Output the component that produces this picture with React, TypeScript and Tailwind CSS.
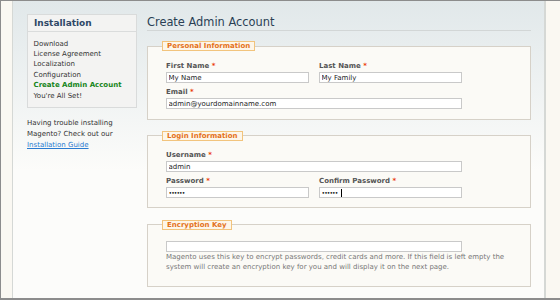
import React from "react";

function Label({ text }: { text: string }) {
  return (
    <div className="leading-[10px] font-bold text-[#555]">
      {text} <span className="text-[#eb3b0c]">*</span>
    </div>
  );
}

function TextInput({ value, w = "w-[143px]" }: { value: string; w?: string }) {
  return (
    <input
      readOnly
      value={value}
      className={`${w} h-[11px] mt-[1px] block border border-[#c9c9c9] bg-white px-[1.5px] text-[7px] text-[#222] font-['DejaVu_Sans',sans-serif] outline-none`}
    />
  );
}

function PasswordInput({ caret = false }: { caret?: boolean }) {
  return (
    <div className="relative mt-[1px] w-[143px] h-[11px]">
      <input
        readOnly
        type="password"
        value="123456"
        className="w-full h-full block border border-[#c9c9c9] bg-white px-[1.5px] text-[6px] tracking-[-0.9px] text-[#111] font-['DejaVu_Sans',sans-serif] outline-none"
      />
      {caret && <span className="absolute left-[21.5px] top-[1.5px] w-[1px] h-[8px] bg-black" />}
    </div>
  );
}

function Fieldset({ legend, children, pt, pb }: { legend: string; children: React.ReactNode; pt: string; pb: string }) {
  return (
    <fieldset className={`border border-[#d6d1c8] bg-[#fbfaf6] px-[18px] ${pt} ${pb}`}>
      <legend className="ml-[-4px] border border-[#f2c47d] bg-[#fdf6e9] px-[4px] leading-[8px] font-bold text-[#e4711a]">
        {legend}
      </legend>
      {children}
    </fieldset>
  );
}

export default function App() {
  return (
    <div className="w-[560px] h-[300px] overflow-hidden bg-[#faf8f2] border-t border-l border-b-2 border-[#8c8c8c] pl-[11px] pr-[14px] flex font-['DejaVu_Sans',sans-serif] text-[7px] text-[#333]">
      <div className="flex-1 flex border-l border-[#d5d8d5] border-r-2 border-r-[#d5d8d5] bg-[linear-gradient(to_bottom,#e1e8ea_0px,#fcfcfa_170px)] pt-[13px] pl-[14px]">
        <aside className="w-[110px] shrink-0">
          <div className="border border-[#d9dbdb] bg-[#f3f3f2]">
            <div className="h-[17px] leading-[17px] px-[6px] text-[9px] font-bold text-[#2e4867] border-b border-[#dadcdc]">
              Installation
            </div>
            <ul className="px-[5.5px] pt-[6.5px] pb-[6px] leading-[10.4px] text-[#333]">
              <li>Download</li>
              <li>License Agreement</li>
              <li>Localization</li>
              <li>Configuration</li>
              <li className="font-bold text-[#16851a]">Create Admin Account</li>
              <li>You're All Set!</li>
            </ul>
          </div>
          <p className="mt-[10.5px] leading-[10.6px] text-[#333]">
            Having trouble installing
            <br />
            Magento? Check out our
            <br />
            <a href="#" className="text-[#2a7bd0] underline">
              Installation Guide
            </a>
          </p>
        </aside>
        <main className="ml-[10px] w-[384px] pt-[1px]">
          <h1 className="text-[11.4px] leading-[14px] pb-[1px] text-[#2a3f55] border-b border-[#d2d6d6] font-normal">
            Create Admin Account
          </h1>

          <div className="mt-[10px]">
            <Fieldset legend="Personal Information" pt="pt-[10px]" pb="pb-[9.5px]">
              <div className="grid grid-cols-[143px_143px] gap-x-[10px]">
                <div>
                  <Label text="First Name" />
                  <TextInput value="My Name" />
                </div>
                <div>
                  <Label text="Last Name" />
                  <TextInput value="My Family" />
                </div>
              </div>
              <div className="mt-[4px]">
                <Label text="Email" />
                <TextInput value="admin@yourdomainname.com" w="w-[296px]" />
              </div>
            </Fieldset>
          </div>

          <div className="mt-[11px]">
            <Fieldset legend="Login Information" pt="pt-[9.5px]" pb="pb-[8.5px]">
              <div>
                <Label text="Username" />
                <TextInput value="admin" w="w-[296px]" />
              </div>
              <div className="mt-[4px] grid grid-cols-[143px_143px] gap-x-[10px]">
                <div>
                  <Label text="Password" />
                  <PasswordInput />
                </div>
                <div>
                  <Label text="Confirm Password" />
                  <PasswordInput caret />
                </div>
              </div>
            </Fieldset>
          </div>

          <div className="mt-[12px]">
            <Fieldset legend="Encryption Key" pt="pt-[11px]" pb="pb-[14px]">
              <input
                readOnly
                value=""
                className="w-[296px] h-[11px] block border border-[#c9c9c9] bg-white px-[1.5px] text-[7px] outline-none"
              />
              <p className="leading-[10px] text-[#777]">
                Magento uses this key to encrypt passwords, credit cards and more. If this field is left empty the system
                will create an encryption key for you and will display it on the next page.
              </p>
            </Fieldset>
          </div>
        </main>
      </div>
    </div>
  );
}
